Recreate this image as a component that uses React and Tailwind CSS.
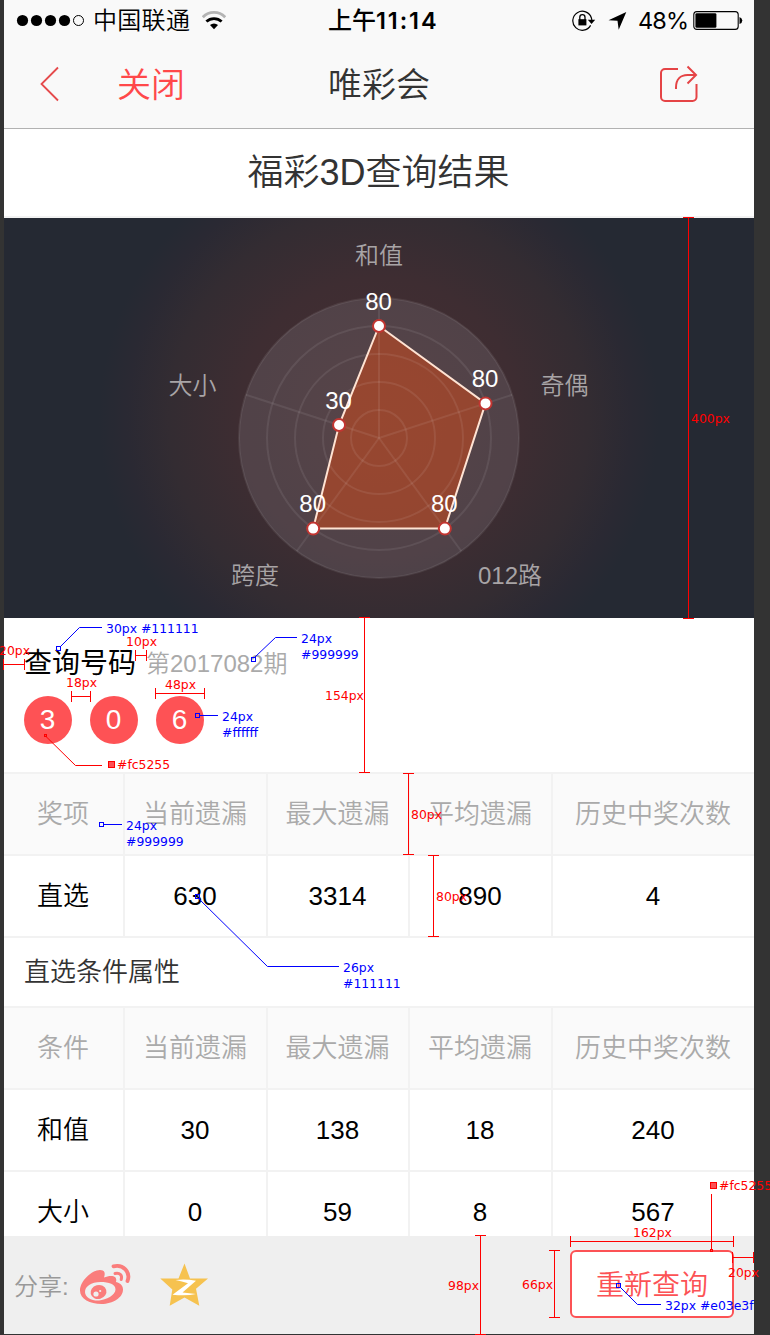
import React from "react";

const CJK = "font-['Liberation_Sans','Noto_Sans_CJK_SC',sans-serif]";

const RED = "#ff0000";
const BLUE = "#0000ff";

function StatusBar() {
  return (
    <div className="flex h-[42px] items-center text-black">
      <svg className="ml-[12px] h-5 w-[70px] shrink-0" viewBox="0 0 70 20">
        {[6.5, 20.5, 34.5, 48.5].map((x) => (
          <circle key={x} cx={x} cy="9.5" r="5.6" fill="#000" />
        ))}
        <circle cx="62.5" cy="9.5" r="5" fill="none" stroke="#000" strokeWidth="1" />
      </svg>
      <span className="ml-[7px] w-[96px] shrink-0 whitespace-nowrap text-[24px] font-[350] leading-[42px] tracking-[0.3px]">中国联通</span>
      <svg className="ml-[13px] h-5 w-6 shrink-0" viewBox="0 0 24 20">
        <path d="M0.8 6.2a15.5 15.5 0 0 1 22.4 0" fill="none" stroke="#b4b4b4" strokeWidth="2.8" />
        <path d="M4.400 10.600a11 11 0 0 1 15.200 0" fill="none" stroke="#000" strokeWidth="2.800" />
        <path d="M12 18.200l-4-4.200a6 6 0 0 1 8 0z" fill="#000" />
      </svg>
      <span className="ml-[102px] flex w-[108px] shrink-0 whitespace-nowrap font-['Inter','Noto_Sans_CJK_SC',sans-serif] text-[24px] font-medium leading-[42px]">
        <span className="w-[48px]">上午</span>
        <span className="text-[23.5px] font-semibold tracking-[1.9px]">11:14</span>
      </span>
      <svg className="ml-[136px] h-6 w-[24px] shrink-0" viewBox="0 0 24 24">
        <path d="M18.600 16.400a9.500 9.500 0 1 1 .8-7.400l.6 3" fill="none" stroke="#000" strokeWidth="1.200" />
        <path d="M15.800 10.800h7.400l-3.700 4.200z" fill="#000" />
        <rect x="6.400" y="10.200" width="8" height="6.200" fill="#000" />
        <path d="M7.800 11V8.300a2.500 2.500 0 0 1 5.200 0V11" fill="none" stroke="#000" strokeWidth="1.300" />
      </svg>
      <svg className="ml-[12px] h-[20px] w-[20px] shrink-0" viewBox="0 0 20 20">
        <path d="M18.300 1L0.500 9.200l9 .6 1.200 8.900z" fill="#000" />
      </svg>
      <span className="ml-[10px] w-[50px] shrink-0 whitespace-nowrap font-['Inter',sans-serif] text-[23.5px] leading-[42px] tracking-[-0.9px]">48%</span>
      <svg className="ml-[5px] h-5 w-[50px] shrink-0" viewBox="0 0 50 20">
        <rect x="0.800" y="0.600" width="44.400" height="17.800" rx="3" fill="none" stroke="#000" strokeWidth="1.100" />
        <rect x="2.400" y="2.200" width="21" height="14.600" rx="1.400" fill="#000" />
        <path d="M46.500 6q2.800 1 2.800 3.500t-2.800 3.500z" fill="#000" />
      </svg>
    </div>
  );
}

function NavBar() {
  return (
    <div className="flex h-[86px] items-center">
      <svg className="mb-[2px] ml-[35px] h-[36px] w-[20px] shrink-0" viewBox="0 0 20 36">
        <path d="M19 1.500L2.500 18l16.500 16.500" fill="none" stroke="#e54a4c" strokeWidth="1.800" />
      </svg>
      <span className="ml-[58px] w-[70px] shrink-0 whitespace-nowrap text-[34px] font-[350] leading-[84px] text-[#ff484a]">关闭</span>
      <span className="ml-[141px] w-[104px] shrink-0 whitespace-nowrap text-[34px] font-[350] leading-[84px] text-[#333]">唯彩会</span>
      <svg className="mb-[2px] ml-[226px] h-[38px] w-[40px] shrink-0" viewBox="0 0 40 38">
        <path d="M20 4H7a4 4 0 0 0-4 4v24a4 4 0 0 0 4 4h27.500a4 4 0 0 0 4-4V19" fill="none" stroke="#e54446" strokeWidth="2" />
        <path d="M18 24V22.500C18 14.500 22.500 10 29.500 10H37.500M29.500 1.500L38 10l-8.500 8.500" fill="none" stroke="#e54446" strokeWidth="2" />
      </svg>
    </div>
  );
}

const CX = 375;
const CY = 220;
const SCORES = [80, 80, 80, 80, 30];

function polar(index, radius) {
  const a = ((-90 + index * 72) * Math.PI) / 180;
  return [CX + Math.cos(a) * radius, CY + Math.sin(a) * radius];
}

function Radar() {
  const pts = SCORES.map((s, i) => polar(i, s * 1.4));
  const names = [
    ["和值", 375, 46],
    ["奇偶", 560.5, 176],
    ["012路", 506, 366],
    ["跨度", 251, 366],
    ["大小", 188.5, 176],
  ];
  return (
    <svg className="block h-[400px] w-[750px] shrink-0" viewBox="0 0 750 400">
      <defs>
        <radialGradient id="glow" gradientUnits="userSpaceOnUse" cx="375" cy="200" r="280">
          <stop offset="0" stopColor="#462f31" />
          <stop offset="0.5" stopColor="#3e2d32" />
          <stop offset="0.75" stopColor="#332c32" />
          <stop offset="0.9" stopColor="#2a2933" />
          <stop offset="1" stopColor="#252933" />
        </radialGradient>
      </defs>
      <rect width="750" height="400" fill="url(#glow)" />
      <circle cx={CX} cy={CY} r="140" fill="#b4b4be" fillOpacity="0.16" />
      <polygon points={pts.map((p) => p.join(",")).join(" ")} fill="#c24a22" fillOpacity="0.6" />
      {[28, 56, 84, 112, 140].map((r) => (
        <circle key={r} cx={CX} cy={CY} r={r} fill="none" stroke="#fff" strokeOpacity="0.08" strokeWidth="2" />
      ))}
      {SCORES.map((_, i) => {
        const [x, y] = polar(i, 140);
        return <line key={i} x1={CX} y1={CY} x2={x} y2={y} stroke="#fff" strokeOpacity="0.08" strokeWidth="2" />;
      })}
      <polygon points={pts.map((p) => p.join(",")).join(" ")} fill="none" stroke="#ffe3d3" strokeWidth="2" />
      {pts.map(([x, y], i) => (
        <g key={i}>
          <circle cx={x} cy={y} r="6" fill="#fff" stroke="#c23531" strokeWidth="2" />
          <text x={x - 0.5} y={y - 16.5} textAnchor="middle" className="fill-white text-[24px]">{SCORES[i]}</text>
        </g>
      ))}
      {names.map(([t, x, y]) => (
        <text key={t} x={x} y={y} textAnchor="middle" className="fill-[#a8a4a6] text-[24px] font-[350]">{t}</text>
      ))}
    </svg>
  );
}

const COLS = "grid grid-cols-[121px_143px_142px_143px_201px]";

function Row({ cells, head }) {
  return (
    <div className={COLS + " h-[82px] shrink-0 border-b-2 border-[#f2f2f2] font-[350] " + (head ? "bg-[#fafafa] text-[#aaa]" : "bg-white text-black")}>
      {cells.map((c, i) => (
        <div key={i} className={"flex items-center justify-center whitespace-nowrap pr-px text-[26px] leading-none " + (i < 4 ? "border-r-2 border-[#f2f2f2]" : "")}>
          {c}
        </div>
      ))}
    </div>
  );
}

function Weibo() {
  return (
    <svg className="h-[42px] w-[52px]" viewBox="0 0 52 42">
      <path fill="#fa7d7c" fillRule="evenodd" d="M1 26.500C1 17 13 6 21 6c5 0 5.500 3.500 4 7.500 6-2.500 14-2.500 12 4.500 5 1.500 7 4 7 7.500 0 8-10 14.500-21.500 14.500S1 35 1 26.500zM21.500 18C12 18 6 22.500 6 28s7 9 14 8.500S36.500 31 36.500 25.500 30 18 21.500 18z" />
      <ellipse cx="19.500" cy="28" rx="8" ry="7" transform="rotate(-15 19.500 28)" fill="#fa7d7c" />
      <circle cx="17" cy="30" r="2.600" fill="#efefef" />
      <circle cx="21.200" cy="27" r="1.100" fill="#efefef" />
      <path d="M34.500 2.400C44 0 52 8 48.500 17" fill="none" stroke="#fa7d7c" strokeWidth="3.800" strokeLinecap="round" />
      <path d="M36 9.500c5-1.200 7.500 2 6.200 6" fill="none" stroke="#fa7d7c" strokeWidth="3" strokeLinecap="round" />
    </svg>
  );
}

function QZone() {
  return (
    <svg className="h-[44px] w-[48px]" viewBox="0 0 48 44">
      <path d="M24.500 0.500L30 15.500h18L36 25.800 39.300 42.700 24.500 34.500 9.700 42.700 12.300 26.500 0.300 15.500H18.500z" fill="#f6c24f" />
      <path d="M15.500 17q10-1.200 20.500.8L22.500 29.500q7 .6 13.500 1.600-9 2-23.500.7L28 20.200q-6-2-12.500-3.200z" fill="#fff" />
    </svg>
  );
}

function Annotations() {
  const measures = [
    "M688.5 217.5V618.5M683 217.5H694M683 618.5H694",
    "M364.5 617.5V772.5M359 617.5H370M359 772.5H370",
    "M408.5 773.5V854.5M403 773.5H414M403 854.5H414",
    "M433.5 855.5V936.5M428 855.5H439M428 936.5H439",
    "M4 664.5H24M3.5 659V670M24.5 659V670",
    "M135.5 650V661M146.5 650V661M135 655.5H147",
    "M71.5 691V702M90.5 691V702M71 696.5H91",
    "M155.5 688V699M204.5 688V699M155 693.5H205",
    "M480.5 1235.5V1334M475 1235.5H486M475 1334.5H486",
    "M554.5 1250.5V1317.5M549 1250.5H560M549 1317.5H560",
    "M570.5 1236V1247M733.5 1236V1247M570 1241.5H734",
    "M711.5 1194V1249",
    "M45.5 736L75.5 765.5H102",
    "M733 1257.5H753M732.5 1252V1263M753.5 1252V1263",
  ];
  const leaders = [
    "M60 647L79.5 627.5H102",
    "M255 657L275.5 637.5H297",
    "M200 715.5H218",
    "M104 824.5H122",
    "M198 898L267.5 966.5H339",
    "M620 1287L637.5 1304.5H661",
  ];
  const notes = [
    [691, 411, "400px", 1], [-1, 643, "20px", 1], [126, 634, "10px", 1], [66, 675, "18px", 1],
    [165, 677, "48px", 1], [325, 688, "154px", 1], [117, 757, "#fc5255", 1], [411, 807, "80px", 1],
    [436, 889, "80px", 1], [448, 1278, "98px", 1], [522, 1277, "66px", 1], [633, 1225, "162px", 1],
    [728, 1265, "20px", 1], [719, 1178, "#fc5255", 1],
    [106, 621, "30px #111111"], [301, 631, "24px"], [301, 647, "#999999"], [222, 709, "24px"],
    [222, 725, "#ffffff"], [126, 818, "24px"], [126, 834, "#999999"], [343, 960, "26px"],
    [343, 976, "#111111"], [665, 1298, "32px #e03e3f"],
  ];
  return (
    <div className="pointer-events-none absolute inset-0 overflow-hidden">
      <svg className="absolute inset-0 h-[1335px] w-[770px]" viewBox="0 0 770 1335">
        <g fill="none" stroke={RED} strokeWidth="1">
          {measures.map((d) => <path key={d} d={d} />)}
          <rect x="108.5" y="761.5" width="6" height="6" fill="#fc5255" />
          <rect x="710.5" y="1182.5" width="6" height="6" fill="#fc5255" />
          <rect x="44.5" y="734.5" width="2" height="2" />
          <rect x="710.5" y="1249.5" width="2" height="2" />
        </g>
        <g fill="none" stroke={BLUE} strokeWidth="1">
          {leaders.map((d) => <path key={d} d={d} />)}
          {[[56.5, 646.5], [251.5, 657.5], [195.5, 713.5], [99.5, 822.5], [195.5, 894.5], [616.5, 1283.5]].map(([x, y]) => (
            <rect key={x + "-" + y} x={x} y={y} width="4" height="4" />
          ))}
        </g>
      </svg>
      {notes.map(([x, y, t, red], i) => (
        <span
          key={i}
          className={"absolute whitespace-nowrap font-['DejaVu_Sans',sans-serif] text-[12.4px] leading-4 " + (red ? "text-[#ff0000]" : "text-[#0000ff]")}
          style={{ left: x, top: y }}
        >
          {t}
        </span>
      ))}
    </div>
  );
}

export default function App() {
  return (
    <div className={"relative flex h-[1335px] w-[770px] overflow-hidden bg-[#333] pl-1 " + CJK}>
      <div className="flex h-[1334px] w-[750px] shrink-0 flex-col bg-white">
        <header className="h-[129px] shrink-0 border-b border-[#b2b2b2] bg-[#f9f9f9]">
          <StatusBar />
          <NavBar />
        </header>
        <h1 className="h-[89px] shrink-0 border-b-2 border-[#f2f2f2] pr-px text-center text-[36px] font-[350] leading-[87px] text-[#333]">福彩3D查询结果</h1>
        <Radar />
        <section className="h-[156px] shrink-0 border-b-2 border-[#f2f2f2] px-5 pt-[28px]">
          <div className="flex h-[36px] items-center whitespace-nowrap">
            <span className="w-[112px] text-[28px] leading-none text-black">查询号码</span>
            <span className="ml-[10px] text-[24px] font-[350] leading-none text-[#aaa]">第2017082期</span>
          </div>
          <div className="mt-[14px] flex gap-[18px]">
            {["3", "0", "6"].map((n) => (
              <span key={n} className="flex size-12 items-center justify-center rounded-full bg-[#fe5255] pr-px text-[28px] leading-none text-white">{n}</span>
            ))}
          </div>
        </section>
        <Row head cells={["奖项", "当前遗漏", "最大遗漏", "平均遗漏", "历史中奖次数"]} />
        <Row cells={["直选", "630", "3314", "890", "4"]} />
        <h2 className="h-[70px] shrink-0 border-b-2 border-[#f2f2f2] px-5 text-[26px] font-[350] leading-[68px] text-[#333]">直选条件属性</h2>
        <Row head cells={["条件", "当前遗漏", "最大遗漏", "平均遗漏", "历史中奖次数"]} />
        <Row cells={["和值", "30", "138", "18", "240"]} />
        <div className="h-[64px] shrink-0 overflow-hidden">
          <Row cells={["大小", "0", "59", "8", "567"]} />
        </div>
        <footer className="flex h-[98px] shrink-0 items-center bg-[#efefef] pl-[10px] pr-5">
          <span className="w-[60px] whitespace-nowrap pt-[3px] text-[24px] font-[350] text-[#999]">分享:</span>
          <div className="ml-[5px]"><Weibo /></div>
          <div className="ml-[29px]"><QZone /></div>
          <button className="mb-[2px] ml-auto h-[68px] w-[164px] rounded-md border-2 border-[#fc5255] bg-white pt-[3px] text-[28px] font-[350] leading-none text-[#fc5255]">重新查询</button>
        </footer>
      </div>
      <Annotations />
    </div>
  );
}
